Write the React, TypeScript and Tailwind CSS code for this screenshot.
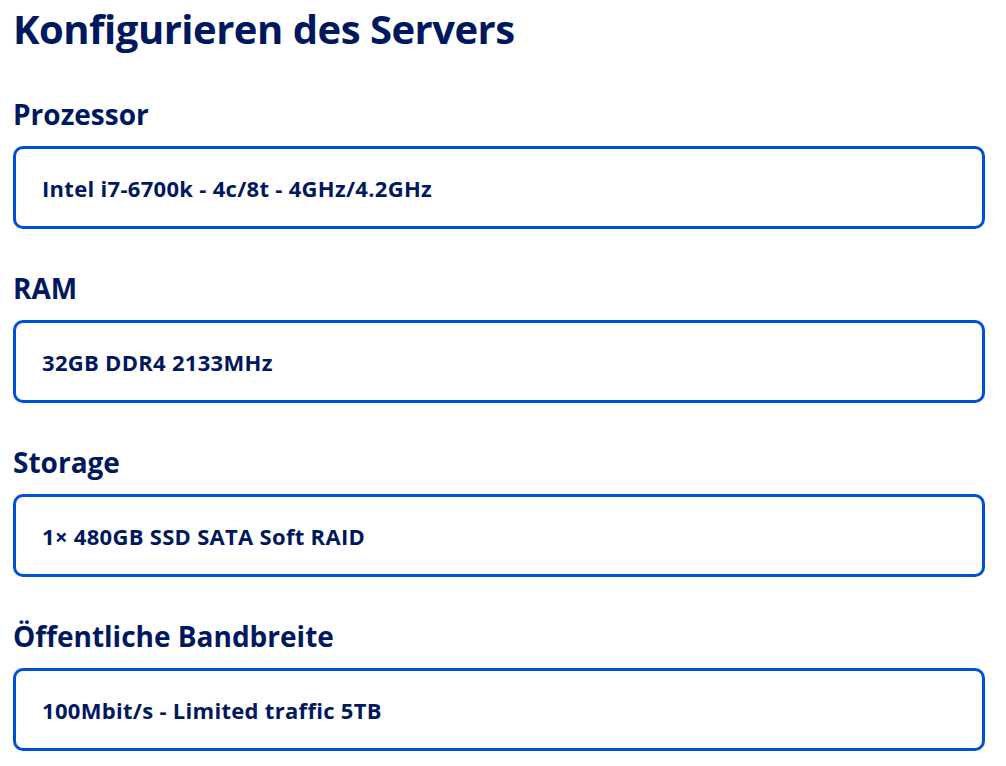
const options = [
  { label: 'Prozessor', value: 'Intel i7-6700k - 4c/8t - 4GHz/4.2GHz' },
  { label: 'RAM', value: '32GB DDR4 2133MHz' },
  { label: 'Storage', value: '1× 480GB SSD SATA Soft RAID' },
  { label: 'Öffentliche Bandbreite', value: '100Mbit/s - Limited traffic 5TB' },
];

export default function App() {
  return (
    <div className="min-h-screen bg-white px-[13px] pt-[5px] text-[#00185e] [font-family:'Open_Sans','Noto_Sans',sans-serif]">
      <h1 className="text-[40px] font-bold leading-[48px] tracking-[-0.5px]">Konfigurieren des Servers</h1>
      <div className="mt-[44px] flex w-[972px] flex-col gap-[42px]">
        {options.map((opt) => (
          <section key={opt.label}>
            <h2 className="text-[28px] font-bold leading-[34px]">{opt.label}</h2>
            <div className="mt-[15px] flex h-[83px] items-center rounded-[10px] border-[3px] border-[#0050d7] px-[26px]">
              <span className="text-[22px] font-bold leading-[30px] tracking-[0.3px]">{opt.value}</span>
            </div>
          </section>
        ))}
      </div>
    </div>
  );
}
